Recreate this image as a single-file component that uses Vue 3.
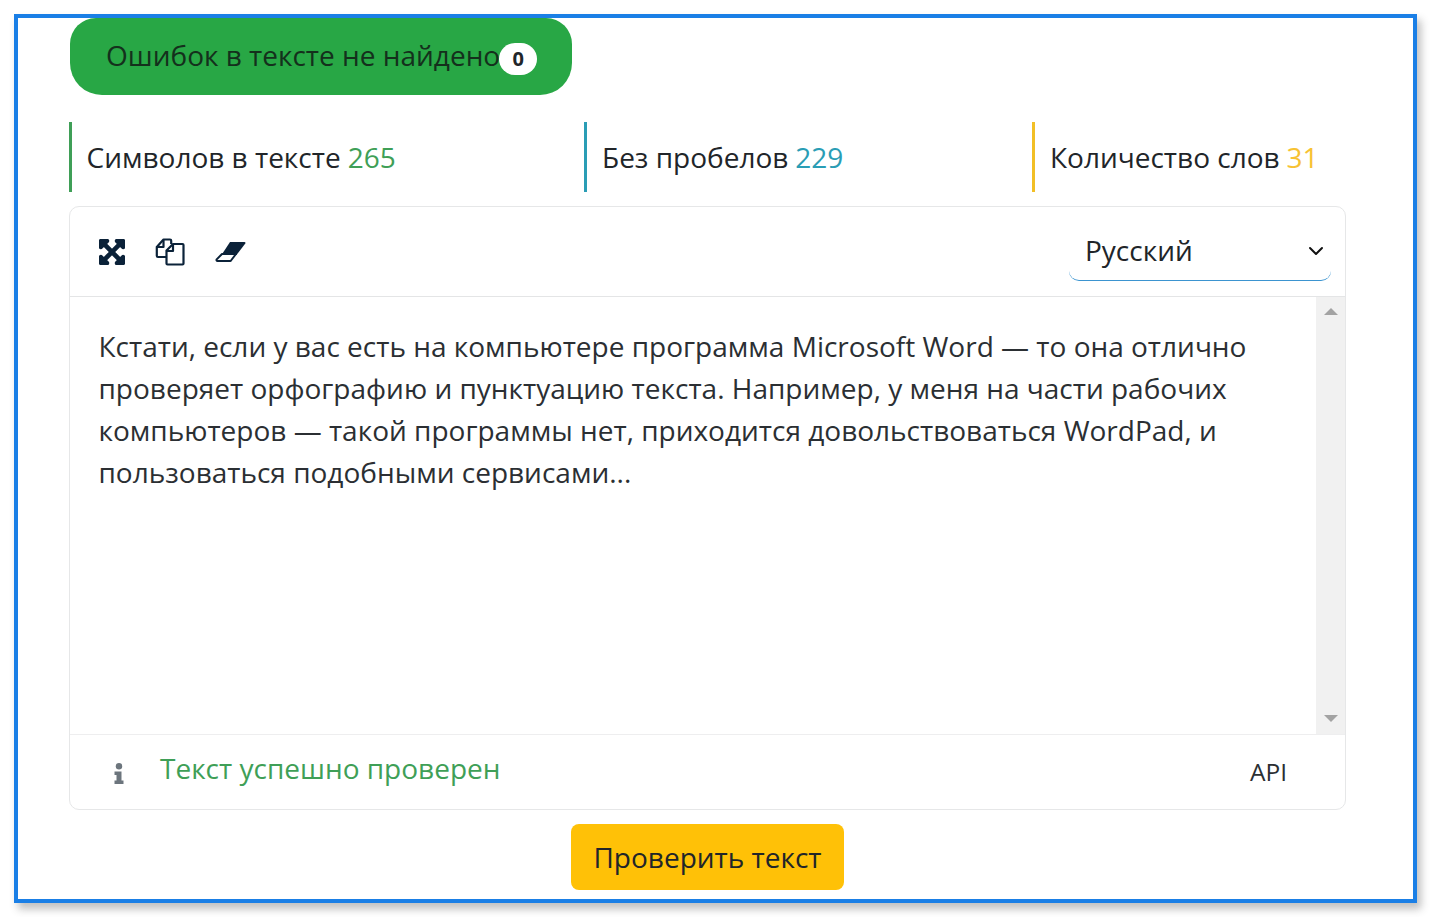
<script setup>
const stats = [
  { label: 'Символов в тексте', value: '265', cls: 'green' },
  { label: 'Без пробелов', value: '229', cls: 'teal' },
  { label: 'Количество слов', value: '31', cls: 'yellow' },
]
</script>

<template>
  <div class="page">
    <div class="frame">
      <div class="pill-row">
        <div class="pill">
          <span>Ошибок в тексте не найдено</span>
          <span class="badge">0</span>
        </div>
      </div>
      <div class="stats">
        <div v-for="s in stats" :key="s.label" class="stat" :class="s.cls">
          {{ s.label }} <span class="num">{{ s.value }}</span>
        </div>
      </div>
      <div class="card">
        <div class="toolbar">
          <div class="tools">
            <svg class="ic" width="26" height="26" viewBox="-10 22 468 468">
              <path fill="#0b2239" stroke="#0b2239" stroke-width="28" stroke-linejoin="miter" d="M448 344v112a23.940 23.940 0 0 1-24 24H312c-21.390 0-32.090-25.900-17-41l36.200-36.200L224 295.600 116.770 402.900 153 439c15.090 15.100 4.390 41-17 41H24a23.940 23.940 0 0 1-24-24V344c0-21.400 25.890-32.100 41-17l36.190 36.200L184.460 256 77.180 148.700 41 185c-15.100 15.100-41 4.400-41-17V56a23.940 23.940 0 0 1 24-24h112c21.390 0 32.090 25.900 17 41l-36.200 36.200L224 216.400l107.230-107.300L295 73c-15.090-15.100-4.390-41 17-41h112a23.940 23.940 0 0 1 24 24v112c0 21.400-25.890 32.100-41 17l-36.190-36.200L263.540 256l107.280 107.300L407 327.100c15.100-15.200 41-4.500 41 16.900z"/>
            </svg>
            <svg class="ic" width="30" height="28" viewBox="0 0 30 28" fill="none" stroke="#0b2239" stroke-width="2.200" stroke-linejoin="round">
              <path d="M11 19H3a1.200 1.200 0 0 1-1.200-1.200V9L8.500 1.500H15a1.200 1.200 0 0 1 1.200 1.200V6"/>
              <path d="M8.500 2v7H2"/>
              <path d="M11.500 12.500 18 6h9.500a1 1 0 0 1 1 1v18.500a1 1 0 0 1-1 1h-15a1 1 0 0 1-1-1z"/>
              <path d="M18 6.500V13h-6.500"/>
            </svg>
            <svg class="ic" width="32" height="22" viewBox="0 0 32 22">
              <path fill="#0b2239" d="M15 1h14.500a1 1 0 0 1 .8 1.600L21.500 14H6.500z"/>
              <path fill="none" stroke="#0b2239" stroke-width="2" stroke-linejoin="round" d="M7 13h14l-5 6.500a1 1 0 0 1-.8.500H2.500a1 1 0 0 1-.8-1.600z"/>
            </svg>
          </div>
          <div class="select">
            <span class="select-label">Русский</span>
            <svg width="16" height="10" viewBox="0 0 16 10" fill="none" stroke="#111" stroke-width="2" stroke-linecap="round" stroke-linejoin="round">
              <path d="M2 2l6 6 6-6"/>
            </svg>
          </div>
        </div>
        <div class="editor">
          <div class="text">Кстати, если у вас есть на компьютере программа Microsoft Word — то она отлично проверяет орфографию и пунктуацию текста. Например, у меня на части рабочих компьютеров — такой программы нет, приходится довольствоваться WordPad, и пользоваться подобными сервисами...</div>
          <div class="scrollbar">
            <span class="arrow up"></span>
            <span class="arrow down"></span>
          </div>
        </div>
        <div class="footer">
          <div class="status">
            <svg width="10" height="21" viewBox="0 0 10 21">
              <circle cx="5" cy="3.200" r="3.200" fill="#6c757d"/>
              <path fill="#6c757d" d="M.5 8.500h7v9h2V21H.5v-3.500h2v-5.500h-2z"/>
            </svg>
            <span class="ok">Текст успешно проверен</span>
          </div>
          <span class="api">API</span>
        </div>
      </div>
      <div class="actions">
        <button class="check">Проверить текст</button>
      </div>
    </div>
  </div>
</template>

<style>
html, body { margin: 0; background: #fff; }
</style>

<style scoped>
.page {
  width: 1431px;
  height: 917px;
  padding: 14px 0 0 14px;
  box-sizing: border-box;
  font-family: "Open Sans", "Noto Sans", sans-serif;
  color: #212529;
  overflow: hidden;
}
.frame {
  width: 1403px;
  height: 889px;
  box-sizing: border-box;
  border: 4px solid #1a7fe6;
  box-shadow: 4px 6px 8px rgba(60, 60, 60, .32);
  background: #fff;
  padding: 0 67px 0 51px;
}
.pill-row { display: flex; }
.pill {
  margin-left: 1px;
  width: 502px;
  height: 77px;
  box-sizing: border-box;
  padding: 0 35px 0 36px;
  background: #28a745;
  border-radius: 26px 26px 32px 32px;
  display: flex;
  align-items: center;
  font-size: 28px;
  color: #14301c;
  white-space: nowrap;
}
.pill > span:first-child { margin-top: -4px; margin-right: -1px; }
.badge {
  width: 38px;
  height: 32px;
  flex: none;
  border-radius: 16px;
  background: #fff;
  color: #212529;
  font-size: 20px;
  font-weight: 700;
  display: flex;
  align-items: center;
  justify-content: center;
  margin-top: 4px;
}
.stats {
  display: flex;
  margin-top: 27px;
  height: 70px;
}
.stat {
  box-sizing: border-box;
  border-left: 3px solid;
  padding-left: 15px;
  display: flex;
  align-items: center;
  gap: 7px;
  font-size: 28px;
  white-space: nowrap;
}
.stat.green { padding-left: 14.500px; }
.stat:nth-child(1) { width: 515px; }
.stat:nth-child(2) { width: 448px; }
.stat.green { border-color: #3f9f57; }
.stat.teal { border-color: #2a9db5; }
.stat.yellow { border-color: #f2bf26; }
.green .num { color: #3f9f57; }
.teal .num { color: #2a9db5; }
.yellow .num { color: #f7c233; }
.card {
  margin-top: 14px;
  width: 1277px;
  height: 604px;
  box-sizing: border-box;
  border: 1px solid #e6e7e8;
  border-radius: 10px;
  display: flex;
  flex-direction: column;
  overflow: hidden;
}
.toolbar {
  height: 90px;
  flex: none;
  box-sizing: border-box;
  border-bottom: 1px solid #e4e5e6;
  display: flex;
  align-items: center;
  justify-content: space-between;
  padding: 0 14px 0 29px;
}
.tools {
  display: flex;
  align-items: center;
  gap: 30px;
}
.select {
  width: 262px;
  height: 58px;
  box-sizing: border-box;
  padding: 0 7px 0 16px;
  border-bottom: 1px solid #3b94d0;
  border-radius: 0 0 10px 10px;
  display: flex;
  align-items: center;
  justify-content: space-between;
  font-size: 28px;
  color: #212529;
}
.select-label { margin-top: -2px; }
.editor {
  flex: 1;
  display: flex;
  min-height: 0;
}
.text {
  flex: 1;
  padding: 28px 50px 0 28.500px;
  font-size: 28px;
  line-height: 42px;
  color: #2b2f33;
}
.scrollbar {
  width: 29px;
  background: #f1f1f1;
  display: flex;
  flex-direction: column;
  justify-content: space-between;
  align-items: center;
  padding: 11px 0 12px;
  box-sizing: border-box;
}
.arrow {
  width: 0;
  height: 0;
  border-left: 7px solid transparent;
  border-right: 7px solid transparent;
}
.arrow.up { border-bottom: 7px solid #a3a3a3; }
.arrow.down { border-top: 7px solid #a3a3a3; }
.footer {
  flex: none;
  height: 75px;
  box-sizing: border-box;
  border-top: 1px solid #eeeeef;
  display: flex;
  align-items: center;
  justify-content: space-between;
  padding: 0 58px 8px 44px;
}
.status {
  display: flex;
  align-items: center;
  gap: 36px;
}
.status svg { margin-top: 10px; }
.ok {
  color: #3f9f57;
  font-size: 28px;
}
.api {
  font-size: 24.500px;
  color: #2b2f33;
  margin-top: 6px;
}
.actions {
  display: flex;
  margin-top: 14px;
  padding-left: 502px;
}
.check {
  width: 273px;
  height: 66px;
  background: #ffc107;
  border: none;
  border-radius: 8px;
  font-family: inherit;
  font-size: 28px;
  color: #212529;
  padding: 0;
}
</style>
